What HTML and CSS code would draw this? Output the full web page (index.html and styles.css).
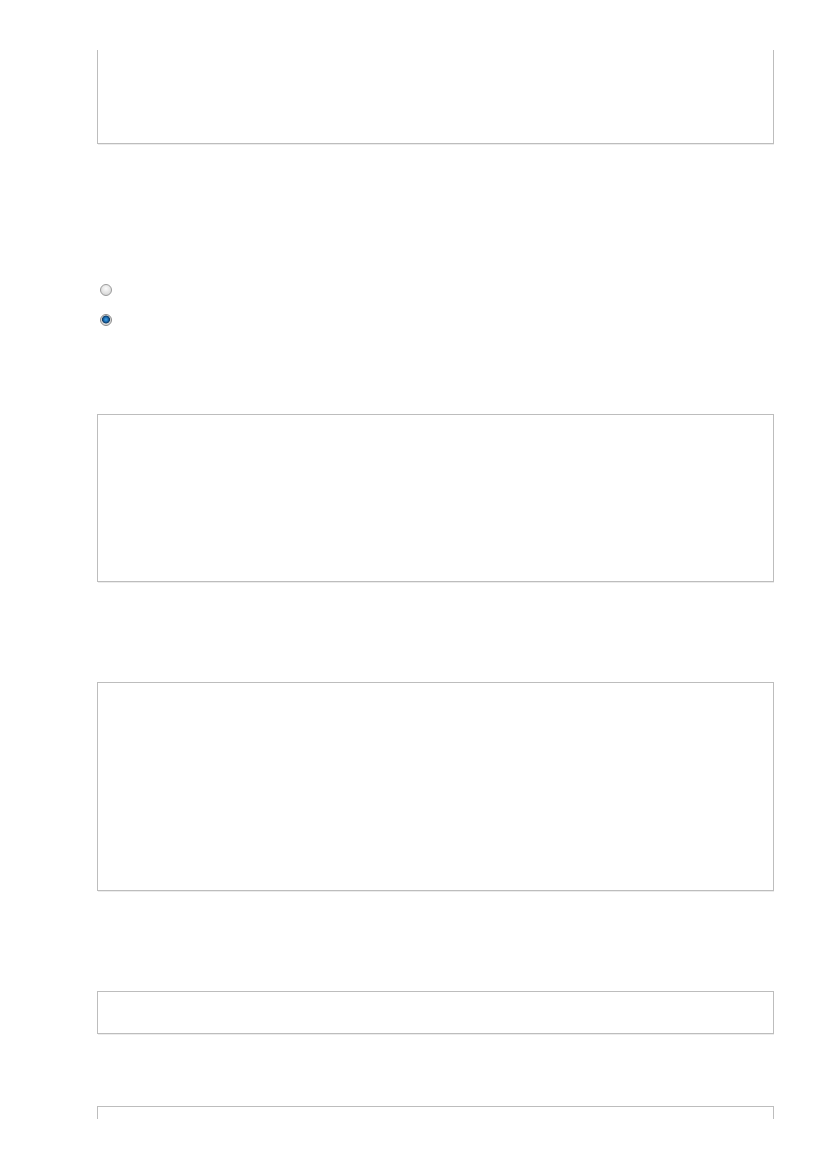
FILE: index.html
```html
<!DOCTYPE html>
<html lang="en">
<head>
  <meta charset="UTF-8">
  <title>Form</title>
  <link rel="stylesheet" href="styles.css">
</head>
<body>
<div class="page">
  <div class="sheet">
    <!-- text area continued from the previous page -->
    <div class="field field-cont"></div>

    <div class="options">
      <span class="radio"></span>
      <span class="radio checked"></span>
    </div>

    <div class="field field-lg"></div>
    <div class="field field-xl"></div>
    <div class="field field-sm"></div>
    <div class="field field-next"></div>
  </div>
</div>
</body>
</html>
```

FILE: styles.css
```css
html, body {
  margin: 0;
  padding: 0;
  background: #fff;
  font-family: "Liberation Sans", Arial, sans-serif;
}

.page {
  width: 827px;
  height: 1169px;
  overflow: hidden;
}

.sheet {
  margin: 50px 0 0 97px;
  width: 677px;
  height: 1069px;
  overflow: hidden;
}

.field {
  box-sizing: border-box;
  border: 1px solid #bdbdbd;
  box-shadow: 1px 1px 0 #ececec;
  background: #fff;
}

.field-cont {
  border-top: 0;
  height: 94px;
}

.field-lg {
  margin-top: 88px;
  height: 168px;
}

.field-xl {
  margin-top: 100px;
  height: 209px;
}

.field-sm {
  margin-top: 100px;
  height: 43px;
}

.field-next {
  margin-top: 72px;
  height: 40px;
  border-bottom: 0;
}

.options {
  margin-top: 140px;
  padding-left: 3px;
  display: flex;
  flex-direction: column;
  gap: 18px;
}

.radio {
  display: block;
  width: 12px;
  height: 12px;
  box-sizing: border-box;
  border-radius: 50%;
  border: 1px solid #9a9a9a;
  background: radial-gradient(circle at 50% 35%, #fbfbfb 0, #e2e2e2 55%, #c9c9c9 100%);
}

.radio.checked {
  border-color: #8a8a8a;
  background: radial-gradient(circle at 50% 45%, #40a4e8 0, #1f72b8 2px, #0b3a66 3.6px, #d4d4d4 4.3px, #eeeeee 100%);
}
```
